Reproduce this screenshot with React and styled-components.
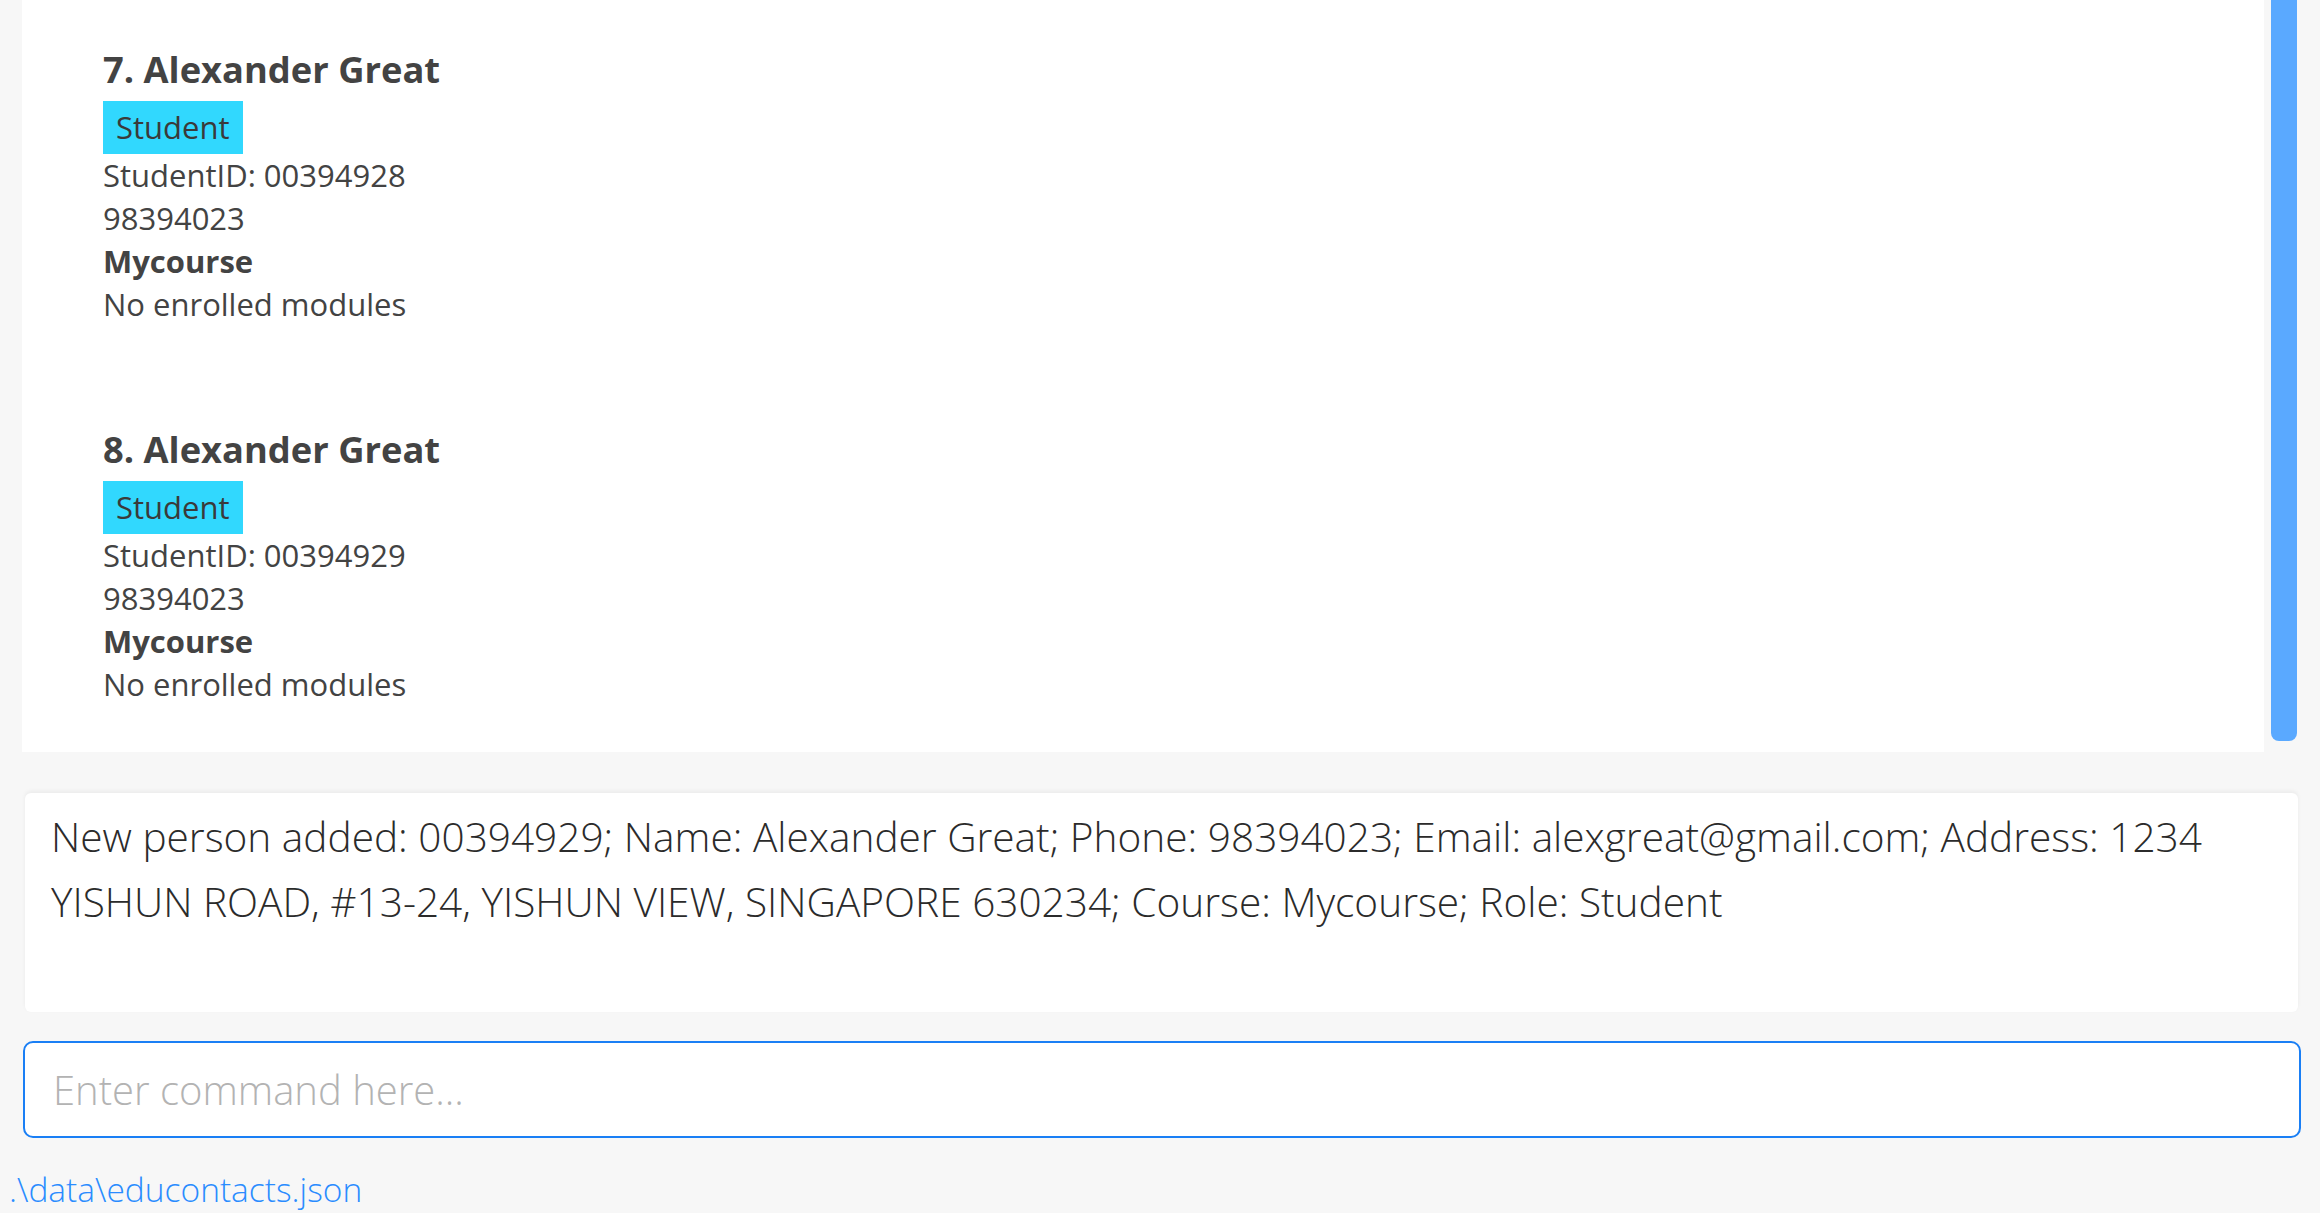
import styled, { createGlobalStyle } from "styled-components";

const people = [
    { index: 7, name: "Alexander Great", role: "Student", id: "00394928", phone: "98394023", course: "Mycourse" },
    { index: 8, name: "Alexander Great", role: "Student", id: "00394929", phone: "98394023", course: "Mycourse" },
];

const resultText =
    "New person added: 00394929; Name: Alexander Great; Phone: 98394023; Email: alexgreat@gmail.com; Address: 1234 YISHUN ROAD, #13-24, YISHUN VIEW, SINGAPORE 630234; Course: Mycourse; Role: Student";

const App = () => {
    return (
        <>
        <GlobalStyle />
        <Page>
            <ListRow>
                <ListPanel>
                    {people.map((person) => (
                        <Card key={person.index}>
                            <Name>{person.index}. {person.name}</Name>
                            <RoleTag>{person.role}</RoleTag>
                            <Line>StudentID: {person.id}</Line>
                            <Line>{person.phone}</Line>
                            <Line $bold>{person.course}</Line>
                            <Line>No enrolled modules</Line>
                        </Card>
                    ))}
                </ListPanel>
                <ScrollTrack>
                    <ScrollThumb />
                </ScrollTrack>
            </ListRow>
            <ResultBox>{resultText}</ResultBox>
            <CommandBox placeholder="Enter command here..." />
            <StatusBar>.\data\educontacts.json</StatusBar>
        </Page>
        </>
    )
}

const GlobalStyle = createGlobalStyle`
    html, body {
        margin: 0;
        padding: 0;
        height: 100%;
        overflow: hidden;
        background: #f7f7f7;
    }
    * {
        box-sizing: border-box;
    }
`;

const Page = styled.div`
    display: flex;
    flex-direction: column;
    height: 1213px;
    font-family: "Open Sans", "Noto Sans", sans-serif;
    background: #f7f7f7;
`;

const ListRow = styled.div`
    display: flex;
    gap: 7px;
    height: 752px;
    padding: 0 23px 0 22px;
`;

const ListPanel = styled.div`
    flex: 1;
    display: flex;
    flex-direction: column;
    justify-content: flex-end;
    overflow: hidden;
    background: #ffffff;
`;

const Card = styled.div`
    flex-shrink: 0;
    display: flex;
    flex-direction: column;
    align-items: flex-start;
    height: 380px;
    padding: 52px 0 46px 81px;
    color: #434343;
`;

const Name = styled.div`
    font-size: 36.3px;
    font-weight: 700;
    line-height: 50px;
    margin-bottom: 7px;
`;

const RoleTag = styled.span`
    display: inline-block;
    height: 53px;
    padding: 0 13px;
    font-size: 31px;
    line-height: 52px;
    background: #31d8fe;
    color: #3a3a3a;
`;

const Line = styled.div`
    font-size: 31px;
    line-height: 43px;
    font-weight: ${(props) => (props.$bold ? 700 : 400)};
`;

const ScrollTrack = styled.div`
    width: 26px;
    display: flex;
    flex-direction: column;
`;

const ScrollThumb = styled.div`
    height: 741px;
    background: #5aa9ff;
    border-radius: 0 0 8px 8px;
`;

const ResultBox = styled.div`
    height: 219px;
    margin: 41px 22px 0 25px;
    padding: 11px 26px;
    background: #ffffff;
    border-radius: 6px;
    box-shadow: 0 -2px 4px rgba(0, 0, 0, 0.05);
    font-size: 40.6px;
    font-weight: 300;
    line-height: 65px;
    color: #2b2b2b;
`;

const CommandBox = styled.input`
    display: block;
    height: 97px;
    margin: 29px 19px 0 23px;
    padding: 0 28px;
    border: 2.5px solid #1a7ff5;
    border-radius: 10px;
    background: #ffffff;
    font-family: "Open Sans", "Noto Sans", sans-serif;
    font-size: 40px;
    font-weight: 300;
    color: #2b2b2b;
    outline: none;

    &::placeholder {
        color: #b3b3b3;
    }
`;

const StatusBar = styled.div`
    margin-top: 29px;
    padding-left: 9px;
    font-size: 33.5px;
    font-weight: 300;
    line-height: 44px;
    color: #2a8cff;
`;

export default App;
